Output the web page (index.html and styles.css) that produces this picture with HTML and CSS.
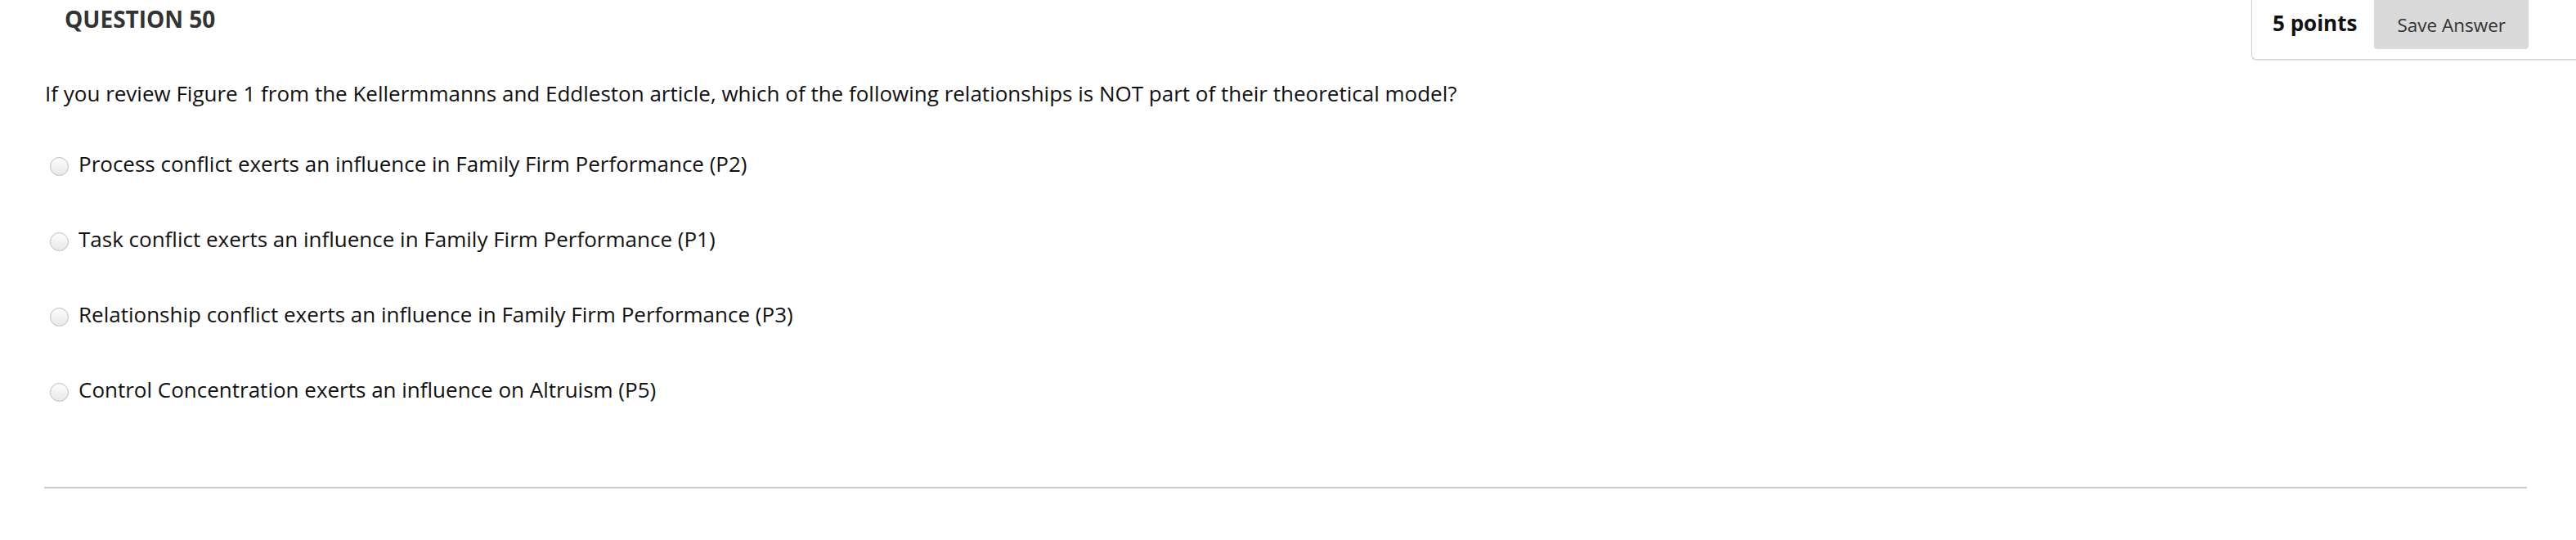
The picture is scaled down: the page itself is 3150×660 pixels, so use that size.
FILE: index.html
```html
<!DOCTYPE html>
<html lang="en">
<head>
  <meta charset="UTF-8" />
  <title>Question 50</title>
  <link rel="stylesheet" href="styles.css">
</head>
<body>

  <div class="question">
    <div class="question-header">
      <h3 class="question-title">QUESTION 50</h3>
      <div class="points-box">
        <span class="points">5 points</span>
        <button class="save-btn">Save Answer</button>
      </div>
    </div>

    <p class="question-text">If you review Figure 1 from the Kellermmanns and Eddleston article, which of the following relationships is NOT part of their theoretical model?</p>

    <ul class="answers">
      <li><span class="radio"></span><label>Process conflict exerts an influence in Family Firm Performance (P2)</label></li>
      <li><span class="radio"></span><label>Task conflict exerts an influence in Family Firm Performance (P1)</label></li>
      <li><span class="radio"></span><label>Relationship conflict exerts an influence in Family Firm Performance (P3)</label></li>
      <li><span class="radio"></span><label>Control Concentration exerts an influence on Altruism (P5)</label></li>
    </ul>

    <hr class="divider">
  </div>

</body>
</html>
```

FILE: styles.css
```css
body {
  margin: 0;
  background: #fff;
  font-family: "Open Sans", "Liberation Sans", sans-serif;
  color: #111;
  overflow: hidden;
}
.question {
  padding: 0 60px 0 54px;
}
.question-header {
  display: flex;
  justify-content: space-between;
  align-items: flex-start;
  height: 72px;
}
.question-title {
  margin: 0;
  padding: 4px 0 0 25px;
  font-size: 28px;
  line-height: 38px;
  font-weight: 700;
  color: #333;
}
.points-box {
  display: flex;
  align-items: center;
  gap: 21px;
  margin-right: -62px;
  padding: 0 60px 12px 25px;
  border: 1px solid #d4d4d4;
  border-top: none;
  border-right: none;
  border-radius: 0 0 0 6px;
  box-shadow: 0 1px 2px rgba(0, 0, 0, 0.12);
}
.points {
  font-size: 26px;
  font-weight: 700;
  color: #111;
  padding-bottom: 4px;
}
.save-btn {
  height: 60px;
  padding: 0 28px;
  border: none;
  border-radius: 0 0 4px 4px;
  background-color: #dadada;
  color: #333;
  font-family: inherit;
  font-size: 22.5px;
  cursor: pointer;
}
.question-text {
  margin: 25px 0 0 1px;
  font-size: 26px;
  line-height: 34px;
}
.answers {
  list-style: none;
  margin: 53px 0 0;
  padding: 0;
}
.answers li {
  display: flex;
  align-items: flex-start;
  height: 32px;
  margin-bottom: 60px;
  font-size: 26px;
  line-height: 32px;
}
.radio {
  flex: none;
  width: 21px;
  height: 21px;
  margin: 8px 12px 0 7px;
  border: 1px solid #bdbdbd;
  border-radius: 50%;
  background: linear-gradient(#fdfdfd, #e8e8e8);
}
.divider {
  margin: 103px 0 0;
  border: none;
  border-top: 2px solid #cbcbcb;
}
```
